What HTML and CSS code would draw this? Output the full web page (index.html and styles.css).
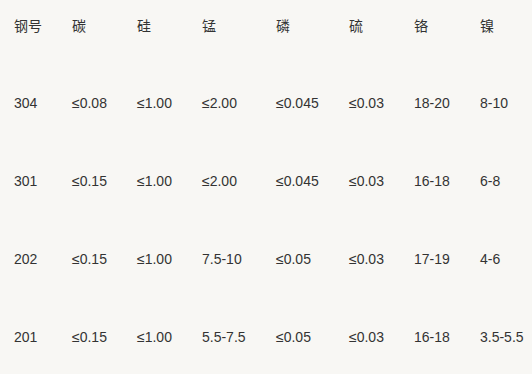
FILE: index.html
```html
<!DOCTYPE html>
<html lang="zh">
<head>
<meta charset="utf-8">
<link rel="stylesheet" href="styles.css">
</head>
<body>
<div class="table">
  <div class="row head">
    <div>钢号</div><div>碳</div><div>硅</div><div>锰</div><div>磷</div><div>硫</div><div>铬</div><div>镍</div>
  </div>
  <div class="row">
    <div>304</div><div>≤0.08</div><div>≤1.00</div><div>≤2.00</div><div>≤0.045</div><div>≤0.03</div><div>18-20</div><div>8-10</div>
  </div>
  <div class="row">
    <div>301</div><div>≤0.15</div><div>≤1.00</div><div>≤2.00</div><div>≤0.045</div><div>≤0.03</div><div>16-18</div><div>6-8</div>
  </div>
  <div class="row">
    <div>202</div><div>≤0.15</div><div>≤1.00</div><div>7.5-10</div><div>≤0.05</div><div>≤0.03</div><div>17-19</div><div>4-6</div>
  </div>
  <div class="row">
    <div>201</div><div>≤0.15</div><div>≤1.00</div><div>5.5-7.5</div><div>≤0.05</div><div>≤0.03</div><div>16-18</div><div>3.5-5.5</div>
  </div>
</div>
</body>
</html>
```
FILE: styles.css
```css
html, body {
  margin: 0;
  padding: 0;
  background: #f8f7f4;
}
body {
  font-family: "Liberation Sans", Arial, "Noto Sans CJK SC", sans-serif;
  font-size: 14px;
  line-height: 20px;
  color: #333333;
  overflow: hidden;
}
.table {
  padding-left: 14px;
}
.row {
  display: grid;
  grid-template-columns: 58px 65px 65px 74px 73px 65px 66px auto;
  align-items: center;
  height: 78px;
  white-space: nowrap;
}
.row.head {
  height: 64px;
  align-items: start;
  padding-top: 0;
}
.row.head > div {
  padding-top: 15px;
  font-family: "Noto Sans CJK SC", sans-serif;
}
```
